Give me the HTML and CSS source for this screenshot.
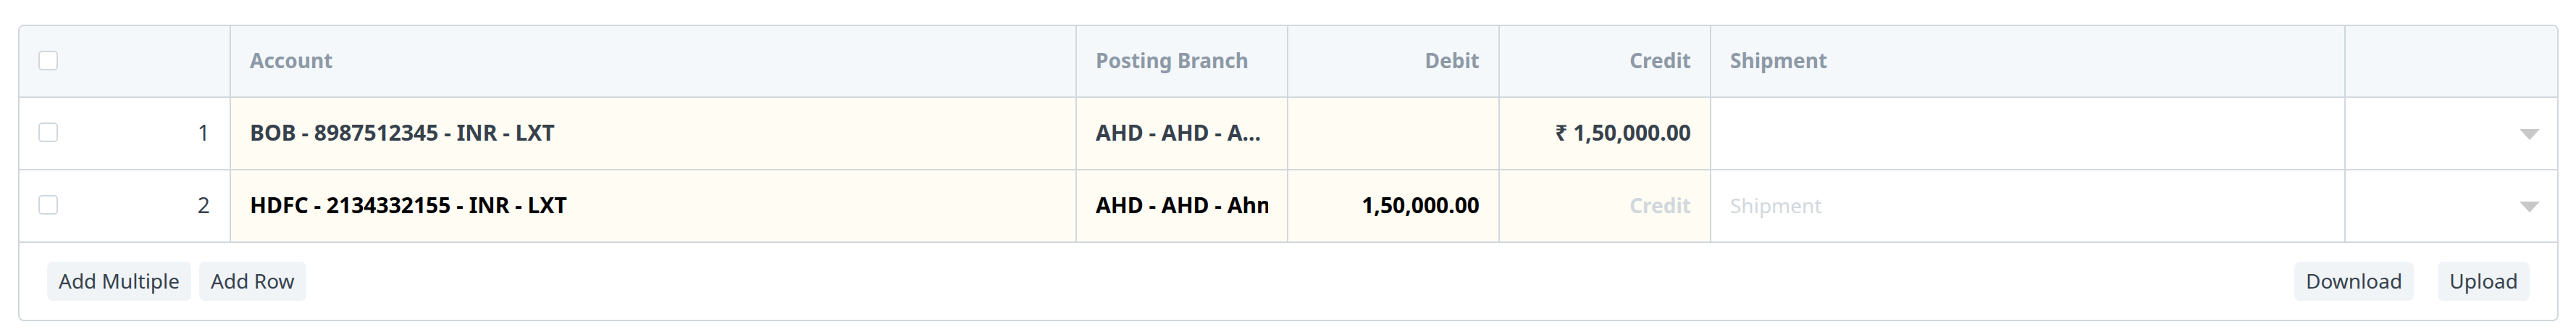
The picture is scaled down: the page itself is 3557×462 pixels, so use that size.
FILE: index.html
```html
<!doctype html>
<html>
  <head>
    <meta charset="UTF-8" />
    <link rel="stylesheet" href="styles.css">
  </head>
  <body>
    <div class="form-grid">
      <div class="grid-heading">
        <div class="grid-row">
          <div class="col col-index"><span class="check"></span></div>
          <div class="col">Account</div>
          <div class="col">Posting Branch</div>
          <div class="col text-right">Debit</div>
          <div class="col text-right">Credit</div>
          <div class="col">Shipment</div>
          <div class="col"></div>
        </div>
      </div>

      <div class="grid-body">
        <div class="grid-row">
          <div class="col col-index"><span class="check"></span><span class="row-index">1</span></div>
          <div class="col static"><span class="value">BOB - 8987512345 - INR - LXT</span></div>
          <div class="col static"><span class="value">AHD - AHD - Ahmedabad</span></div>
          <div class="col static text-right"></div>
          <div class="col static text-right"><span class="value">₹ 1,50,000.00</span></div>
          <div class="col"></div>
          <div class="col col-menu"><span class="caret"></span></div>
        </div>
        <div class="grid-row editable">
          <div class="col col-index"><span class="check"></span><span class="row-index">2</span></div>
          <div class="col static"><span class="value">HDFC - 2134332155 - INR - LXT</span></div>
          <div class="col static"><span class="value clip">AHD - AHD - Ahmedabad</span></div>
          <div class="col static text-right"><span class="value">1,50,000.00</span></div>
          <div class="col static text-right"><span class="placeholder">Credit</span></div>
          <div class="col"><span class="placeholder light">Shipment</span></div>
          <div class="col col-menu"><span class="caret"></span></div>
        </div>
      </div>

      <div class="grid-footer">
        <div class="btn-group">
          <button class="btn">Add Multiple</button>
          <button class="btn">Add Row</button>
        </div>
        <div class="btn-group wide">
          <button class="btn">Download</button>
          <button class="btn">Upload</button>
        </div>
      </div>
    </div>
  </body>
</html>
```

FILE: styles.css
```css
body {
  margin: 0;
  padding: 34px 24px 20px 25px;
  font-family: "Noto Sans", "Open Sans", sans-serif;
  font-size: 28px;
  color: #36414c;
  background: #fff;
}
.form-grid {
  border: 2px solid #d1d8dd;
  border-radius: 8px;
  overflow: hidden;
}
.grid-row {
  display: grid;
  grid-template-columns: 1fr 4fr 1fr 1fr 1fr 3fr 1fr;
  height: 100px;
  box-sizing: border-box;
  border-bottom: 2px solid #d1d8dd;
}
.grid-heading .grid-row {
  height: 99px;
  background: #f5f8fb;
  color: #8d99a6;
  font-weight: 700;
}
.col {
  display: flex;
  align-items: center;
  min-width: 0;
  padding: 0 26px 3px;
  border-right: 2px solid #d1d8dd;
  white-space: nowrap;
  overflow: hidden;
}
.col:last-child {
  border-right: 0;
}
.text-right {
  justify-content: flex-end;
}
.static {
  background: #fffcf4;
  font-weight: 700;
  font-size: 30px;
}
.editable .static {
  color: #000;
}
.value {
  overflow: hidden;
  text-overflow: ellipsis;
}
.value.clip {
  text-overflow: clip;
}
.col-index {
  justify-content: space-between;
  padding-right: 27px;
}
.check {
  width: 27px;
  height: 27px;
  box-sizing: border-box;
  border: 2px solid #d1d8dd;
  border-radius: 5px;
  background: #fff;
}
.row-index {
  font-size: 30px;
  font-weight: 400;
}
.placeholder {
  color: #d1d8dd;
  font-size: 28px;
}
.placeholder.light {
  font-weight: 400;
}
.col-menu {
  justify-content: flex-end;
  padding-right: 24px;
}
.caret {
  width: 0;
  height: 0;
  border-left: 14px solid transparent;
  border-right: 14px solid transparent;
  border-top: 15px solid #c8c8c8;
  margin-top: 5px;
}
.grid-footer {
  display: flex;
  justify-content: space-between;
  padding: 26px 38px 26px;
}
.btn-group {
  display: flex;
  gap: 11px;
}
.btn-group.wide {
  gap: 33px;
}
.btn {
  height: 54px;
  padding: 0 16px 2px;
  border: 0;
  border-radius: 8px;
  background: #f0f4f7;
  color: #36414c;
  font-family: inherit;
  font-size: 28px;
}
```
